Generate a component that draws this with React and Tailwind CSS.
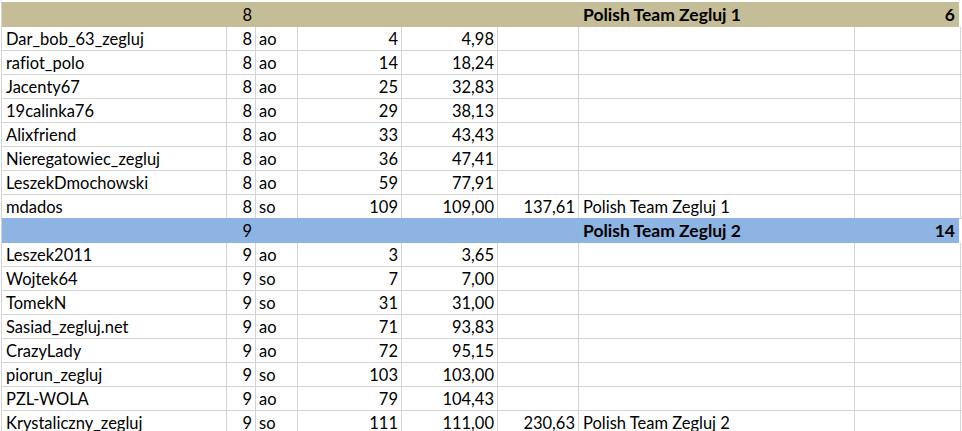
import React from 'react';

const groups = [
    {
        band: "bg-[#c4bd97]",
        nr: "8",
        team: "Polish Team Zegluj 1",
        place: "6",
        rows: [
            ["Dar_bob_63_zegluj", "8", "ao", "4", "4,98"],
            ["rafiot_polo", "8", "ao", "14", "18,24"],
            ["Jacenty67", "8", "ao", "25", "32,83"],
            ["19calinka76", "8", "ao", "29", "38,13"],
            ["Alixfriend", "8", "ao", "33", "43,43"],
            ["Nieregatowiec_zegluj", "8", "ao", "36", "47,41"],
            ["LeszekDmochowski", "8", "ao", "59", "77,91"],
            ["mdados", "8", "so", "109", "109,00", "137,61", "Polish Team Zegluj 1"],
        ],
    },
    {
        band: "bg-[#8db4e2]",
        nr: "9",
        team: "Polish Team Zegluj 2",
        place: "14",
        rows: [
            ["Leszek2011", "9", "ao", "3", "3,65"],
            ["Wojtek64", "9", "so", "7", "7,00"],
            ["TomekN", "9", "so", "31", "31,00"],
            ["Sasiad_zegluj.net", "9", "ao", "71", "93,83"],
            ["CrazyLady", "9", "ao", "72", "95,15"],
            ["piorun_zegluj", "9", "so", "103", "103,00"],
            ["PZL-WOLA", "9", "ao", "79", "104,43"],
            ["Krystaliczny_zegluj", "9", "so", "111", "111,00", "230,63", "Polish Team Zegluj 2"],
        ],
    },
];

const cell = "h-full flex items-center pt-[1px] border-r border-[#d4d4d4] whitespace-nowrap overflow-hidden";

const App = () => {
    return (
        <div
            className="w-[962px] h-[431px] overflow-hidden bg-white text-black text-[16.5px] leading-none pt-[2px] pl-[1px] [font-variant-ligatures:none]"
            style={{ fontFamily: "Lato, 'Open Sans', sans-serif" }}
        >
            <div className="border-l border-[#d4d4d4]">
                {groups.map((g, gi) => (
                    <div key={gi}>
                        {/* Team header band */}
                        <div className={`flex w-[957px] h-[25px] items-center pt-[1px] ${g.band} ${gi > 0 ? "-mt-px" : ""}`}>
                            <div className="w-[225px]"></div>
                            <div className="w-[29px] text-right pr-[4px]">{g.nr}</div>
                            <div className="w-[42px]"></div>
                            <div className="w-[104px]"></div>
                            <div className="w-[96px]"></div>
                            <div className="w-[81px]"></div>
                            <div className="w-[276px] pl-[4px] font-bold text-[17.5px]">{g.team}</div>
                            <div className="w-[104px] text-right pr-[4px] font-bold text-[17.5px]">{g.place}</div>
                        </div>

                        {/* Sailors */}
                        {g.rows.map((r, ri) => (
                            <div key={ri} className="flex h-[24px] border-b border-[#d4d4d4]">
                                <div className={`${cell} w-[225px] pl-[4px]`}>{r[0]}</div>
                                <div className={`${cell} w-[29px] justify-end pr-[3px]`}>{r[1]}</div>
                                <div className={`${cell} w-[42px] pl-[3px]`}>{r[2]}</div>
                                <div className={`${cell} w-[104px] justify-end pr-[3px]`}>{r[3]}</div>
                                <div className={`${cell} w-[96px] justify-end pr-[3px]`}>{r[4]}</div>
                                <div className={`${cell} w-[81px] justify-end pr-[3px]`}>{r[5] || ""}</div>
                                <div className={`${cell} w-[276px] pl-[4px]`}>{r[6] || ""}</div>
                                <div className={`${cell} w-[106px]`}></div>
                            </div>
                        ))}
                    </div>
                ))}
            </div>
        </div>
    );
};

export default App;
